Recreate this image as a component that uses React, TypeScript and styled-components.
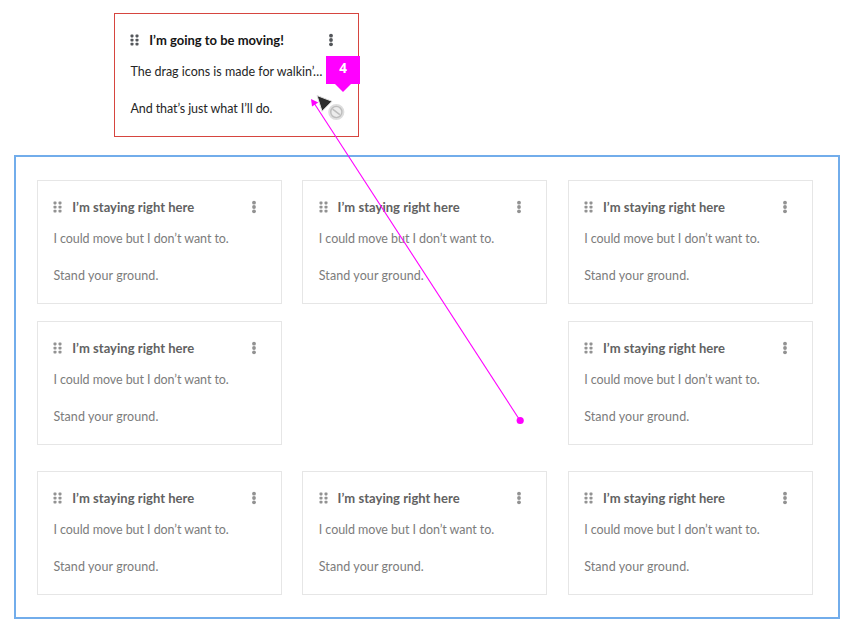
import React from 'react';
import styled, { createGlobalStyle } from 'styled-components';

const GlobalStyle = createGlobalStyle`
  * { box-sizing: border-box; }
  body { margin: 0; background: #fff; }
`;

const Page = styled.main`
  position: relative;
  width: 850px;
  height: 630px;
  overflow: hidden;
  padding: 13px 0 0 14px;
  font-family: Lato, "Open Sans", sans-serif;
`;

const CardBox = styled.article<{ $dragged?: boolean }>`
  width: 245px;
  height: 124px;
  padding: 16px 16px 0 15.4px;
  border: 1px solid ${p => (p.$dragged ? '#d6453f' : '#e6e6e6')};
  color: ${p => (p.$dragged ? '#262626' : '#7c7c7c')};
  margin-left: ${p => (p.$dragged ? '100px' : '0')};
`;

const Header = styled.header`
  display: flex;
  align-items: center;
  height: 20px;
`;

const Title = styled.h2<{ $dragged?: boolean }>`
  flex: 1;
  margin: 0 0 0 9.8px;
  font-size: 13px;
  line-height: 20px;
  font-weight: 700;
  letter-spacing: ${p => (p.$dragged ? '0' : '0.03px')};
  white-space: nowrap;
  color: ${p => (p.$dragged ? '#151515' : '#626262')};
`;

const Line = styled.p<{ $gap: number; $spacing: number }>`
  margin: ${p => p.$gap}px 0 0;
  font-size: 12.5px;
  line-height: 20px;
  white-space: nowrap;
  letter-spacing: ${p => p.$spacing}px;
`;

const DotIcon = styled.svg<{ $dragged?: boolean; $end?: boolean }>`
  display: block;
  flex: none;
  fill: ${p => (p.$dragged ? '#53565a' : '#929292')};
  margin-right: ${p => (p.$end ? '8px' : '0')};
`;

const Zone = styled.section`
  width: 826px;
  height: 464px;
  margin-top: 18px;
  padding: 23px 0 0 21px;
  border: 2px solid #72adeb;
  display: grid;
  grid-template-columns: repeat(3, 245px);
  grid-template-rows: 124px 124px 124px;
  column-gap: 20.4px;
  row-gap: 17px;
  align-content: start;
`;

const Cell = styled.div<{ $low?: boolean }>`
  padding-top: ${p => (p.$low ? '9px' : '0')};
`;

const Overlay = styled.svg`
  position: absolute;
  inset: 0;
  pointer-events: none;
`;

const Badge = styled.div`
  position: absolute;
  left: 326px;
  top: 56px;
  width: 34px;
  height: 28px;
  background: #f0f;
  color: #fff;
  font: 700 13.5px/25px "Open Sans", sans-serif;
  text-align: center;
  &::after {
    content: '';
    position: absolute;
    left: 9px;
    top: 28px;
    border: 8.5px solid transparent;
    border-top-color: #f0f;
    border-bottom: 0;
  }
`;

interface CardProps {
  title: string;
  lines: [string, string];
  spacing?: [number, number];
  dragged?: boolean;
}

function Card({ title, lines, spacing = [-0.06, 0.08], dragged }: CardProps) {
  return (
    <CardBox $dragged={dragged}>
      <Header>
        <DotIcon $dragged={dragged} width="9" height="12" viewBox="0 0 9 12">
          {[2, 6.1, 10.2].map(y => (
            <React.Fragment key={y}>
              <rect x="0.5" y={y - 1.4} width="3" height="2.8" rx="0.8" />
              <rect x="5.5" y={y - 1.4} width="3" height="2.8" rx="0.8" />
            </React.Fragment>
          ))}
        </DotIcon>
        <Title $dragged={dragged}>{title}</Title>
        <DotIcon $dragged={dragged} $end width="6" height="14" viewBox="0 0 6 14">
          {[2.7, 7, 11.3].map(y => <circle key={y} cx="3" cy={y} r="1.9" />)}
        </DotIcon>
      </Header>
      <Line $gap={12} $spacing={spacing[0]}>{lines[0]}</Line>
      <Line $gap={17} $spacing={spacing[1]}>{lines[1]}</Line>
    </CardBox>
  );
}

const slots = [true, true, true, true, false, true, true, true, true];

export default function App() {
  return (
    <Page>
      <GlobalStyle />
      <Card
        dragged
        title="I’m going to be moving!"
        lines={['The drag icons is made for walkin’…', 'And that’s just what I’ll do.']}
        spacing={[0, -0.08]}
      />
      <Zone>
        {slots.map((filled, i) => (
          <Cell key={i} $low={i > 5}>
            {filled && (
              <Card
                title="I’m staying right here"
                lines={['I could move but I don’t want to.', 'Stand your ground.']}
              />
            )}
          </Cell>
        ))}
      </Zone>
      <Overlay width="850" height="630" viewBox="0 0 850 630">
        <circle cx="336.3" cy="112" r="6.4" fill="#ececec" stroke="#dedede" strokeWidth="3.4" />
        <circle cx="336.3" cy="112" r="5.6" fill="none" stroke="#bdbdbd" strokeWidth="1.3" />
        <path d="M332.6 109.2l7.2 5.4" stroke="#bdbdbd" strokeWidth="1.6" />
        <path d="M317 95.5L332 101.3L322 111.3Z" fill="#2b2b2b" stroke="#e2e2e2" strokeWidth="1" />
        <path d="M314 103L520 420.5" stroke="#f0f" strokeWidth="1.1" />
        <path d="M311 99L318.3 102.5L312 106.6Z" fill="#f0f" />
        <circle cx="520.2" cy="420.5" r="3.6" fill="#f0f" />
      </Overlay>
      <Badge>4</Badge>
    </Page>
  );
}
